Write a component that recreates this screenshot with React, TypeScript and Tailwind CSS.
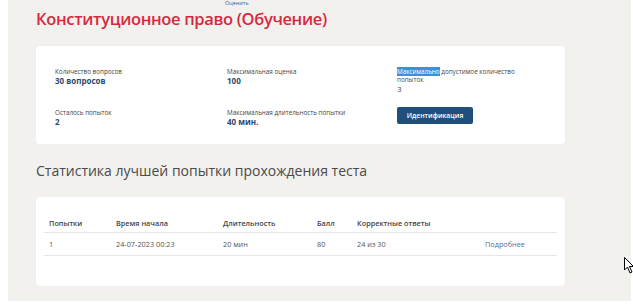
import React from "react";

const font = { fontFamily: '"Open Sans", "Noto Sans", sans-serif' };

function Field({ label, value }: { label: React.ReactNode; value: string }) {
  return (
    <div className="flex flex-col">
      <div className="text-[6.3px] leading-[9px] text-[#444]">{label}</div>
      <div className="text-[8px] leading-[10px] font-bold text-[#2b4a70]">{value}</div>
    </div>
  );
}

export default function App() {
  const headers = ["Попытки", "Время начала", "Длительность", "Балл", "Корректные ответы", ""];
  const row = ["1", "24-07-2023 00:23", "20 мин", "80", "24 из 30"];
  const cols = "grid grid-cols-[67px_107px_94px_40px_128px_1fr]";
  return (
    <div className="w-[633px] h-[308px] bg-white overflow-hidden relative" style={font}>
      <div className="ml-[8px] w-[623px] h-[301px] bg-[#f2f1ee] relative">
        <div className="absolute left-[217px] top-0 text-[5.5px] leading-[7px] text-[#3b5d8a]">Оценить</div>
        <div className="pl-[28px] pt-[7px]">
          <h1 className="text-[16.5px] leading-[24px] tracking-[-0.35px] font-semibold text-[#d8283f]">
            Конституционное право (Обучение)
          </h1>
          <div className="mt-[15px] w-[529px] h-[98px] bg-white rounded-[3px] shadow-[0_0_1px_rgba(0,0,0,0.08)] pl-[19px] pr-[20px] pt-[21px] grid grid-cols-[172px_170px_1fr] grid-rows-[41px_auto]">
            <Field label="Количество вопросов" value="30 вопросов" />
            <Field label="Максимальная оценка" value="100" />
            <div className="flex flex-col">
              <div className="w-[130px] text-[6.3px] leading-[8px] text-[#444] pt-[0.5px]">
                <span className="bg-[#3d8fe0] text-white">Максимально</span> допустимое количество попыток
              </div>
              <div className="text-[8px] leading-[10px] text-[#2b4a70]">3</div>
            </div>
            <Field label="Осталось попыток" value="2" />
            <Field label="Максимальная длительность попытки" value="40 мин." />
            <div className="flex flex-col">
              <button className="block mt-[-1px] h-[17px] w-[76px] rounded-[2px] bg-[#1f4f7d] text-white text-[6.8px] font-semibold leading-[17px] text-center">
                Идентификация
              </button>
            </div>
          </div>
          <h2 className="mt-[17px] text-[14px] leading-[20px] text-[#4a4a4a]">
            Статистика лучшей попытки прохождения теста
          </h2>
          <div className="mt-[16px] w-[529px] h-[89px] bg-white rounded-[3px] shadow-[0_0_1px_rgba(0,0,0,0.08)] px-[8px] pt-[17px]">
            <div className={`${cols} border-b border-[#e6e6e6] h-[19px] items-center text-[7.3px] font-semibold text-[#444]`}>
              {headers.map((h, i) => (
                <div key={i} className="pl-[5px]">{h}</div>
              ))}
            </div>
            <div className={`${cols} border-b border-[#e6e6e6] h-[23px] items-center text-[7.3px] text-[#555]`}>
              {row.map((c, i) => (
                <div key={i} className="pl-[5px]">{c}</div>
              ))}
              <div className="pl-[5px] text-[#4d709a]">Подробнее</div>
            </div>
          </div>
        </div>
        <svg className="absolute left-[616px] top-[257px]" width="10" height="18" viewBox="0 0 10 18">
          <path d="M0.5 0.5 L0.5 13 L3.5 10 L6 16 L8 15 L5.5 9.5 L9.5 9.5 Z" fill="white" stroke="black" strokeWidth="1" />
        </svg>
      </div>
    </div>
  );
}
